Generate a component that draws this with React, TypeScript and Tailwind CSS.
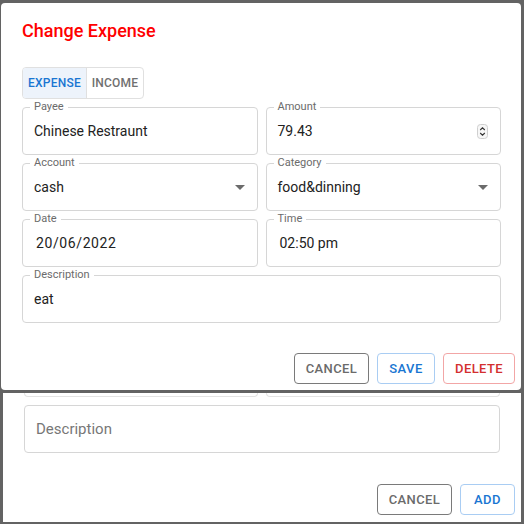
import React from "react";

const font = "font-['Roboto','Liberation_Sans',sans-serif]";

function Field({
  label,
  children,
  className = "",
}: {
  label?: string;
  children?: React.ReactNode;
  className?: string;
}) {
  return (
    <div
      className={`relative h-[48px] rounded-[4px] border border-[#d6d6d6] flex items-center pl-[11px] pr-[11px] ${className}`}
    >
      {label && (
        <span className="absolute -top-[8px] left-[7px] px-[4px] bg-white text-[11px] leading-[14px] text-[#6b6b6b]">
          {label}
        </span>
      )}
      {children}
    </div>
  );
}

function Caret() {
  return (
    <svg width="10" height="5" viewBox="0 0 10 5" className="ml-auto mr-[1px] shrink-0">
      <path d="M0 0 L10 0 L5 5 Z" fill="#6b6b6b" />
    </svg>
  );
}

function Spinner() {
  return (
    <svg width="11" height="15" viewBox="0 0 11 15" className="ml-auto mr-[1px] shrink-0">
      <rect x="0.5" y="0.5" width="10" height="14" rx="3" fill="#f7f7f7" stroke="#cfcfcf" />
      <path d="M3.2 6 L5.5 3.8 L7.8 6" fill="none" stroke="#333" strokeWidth="1.1" />
      <path d="M3.2 9 L5.5 11.2 L7.8 9" fill="none" stroke="#333" strokeWidth="1.1" />
    </svg>
  );
}

function Button({
  children,
  tone,
  className = "",
}: {
  children: React.ReactNode;
  tone: "gray" | "blue" | "red";
  className?: string;
}) {
  const tones = {
    gray: "border-[#7a7a7a] text-[#6b6b6b]",
    blue: "border-[#a9cdf3] text-[#1976d2]",
    red: "border-[#f2a6a6] text-[#d32f2f]",
  };
  return (
    <button
      className={`h-[31px] rounded-[4px] border bg-white text-[13px] font-medium tracking-[0.4px] uppercase flex items-center justify-center ${tones[tone]} ${className}`}
    >
      {children}
    </button>
  );
}

export default function App() {
  return (
    <div className={`w-[524px] h-[524px] bg-[#636363] flex flex-col overflow-hidden ${font}`}>
      {/* edit dialog */}
      <div className="mt-[3px] ml-[1px] w-[520px] h-[387px] shrink-0 bg-white rounded-[4px] flex flex-col">
        <div className="pt-[16px] px-[21px]">
          <h2 className="text-[18px] leading-[24px] font-medium text-[#ff0000]">Change Expense</h2>
        </div>

        <div className="pl-[21px] pr-[20px] pt-[24px] flex flex-col">
          <div className="flex w-fit h-[32px] rounded-[4px] border border-[#e0e0e0] overflow-hidden text-[12px] font-medium tracking-[0.2px]">
            <div className="w-[64px] flex items-center justify-center bg-[#edf3fb] text-[#1976d2] border-r border-[#e0e0e0]">
              EXPENSE
            </div>
            <div className="w-[56px] flex items-center justify-center text-[#707070]">INCOME</div>
          </div>

          <div className="mt-[8px] grid grid-cols-2 gap-x-[8px] gap-y-[8px] text-[14px] text-[#222]">
            <Field label="Payee">Chinese Restraunt</Field>
            <Field label="Amount">
              79.43
              <Spinner />
            </Field>
            <Field label="Account">
              cash
              <Caret />
            </Field>
            <Field label="Category">
              food&amp;dinning
              <Caret />
            </Field>
            <Field label="Date">
              <span className="pl-[2px] tracking-[0.6px]">20/06/2022</span>
            </Field>
            <Field label="Time">
              <span className="pl-[2px]">02:50 pm</span>
            </Field>
            <Field label="Description" className="col-span-2">
              eat
            </Field>
          </div>
        </div>

        <div className="mt-auto pb-[6px] pr-[6px] flex justify-end gap-[8px]">
          <Button tone="gray" className="w-[75px]">Cancel</Button>
          <Button tone="blue" className="w-[58px]">Save</Button>
          <Button tone="red" className="w-[72px]">Delete</Button>
        </div>
      </div>

      {/* underlying add dialog */}
      <div className="mt-[3px] ml-[3px] w-[518px] flex-1 mb-[2px] bg-white flex flex-col">
        <div className="h-[4px] pl-[21px] pr-[21px] flex gap-[8px]">
          <div className="flex-1 border-b border-x border-[#e3e3e3] rounded-b-[4px]" />
          <div className="flex-1 border-b border-x border-[#e3e3e3] rounded-b-[4px]" />
        </div>
        <div className="pl-[21px] pr-[21px] mt-[8px]">
          <Field className="h-[47px] text-[15px] text-[#777]">Description</Field>
        </div>
        <div className="mt-auto pb-[7px] pr-[6px] flex justify-end gap-[8px]">
          <Button tone="gray" className="w-[75px]">Cancel</Button>
          <Button tone="blue" className="w-[55px]">Add</Button>
        </div>
      </div>
    </div>
  );
}
